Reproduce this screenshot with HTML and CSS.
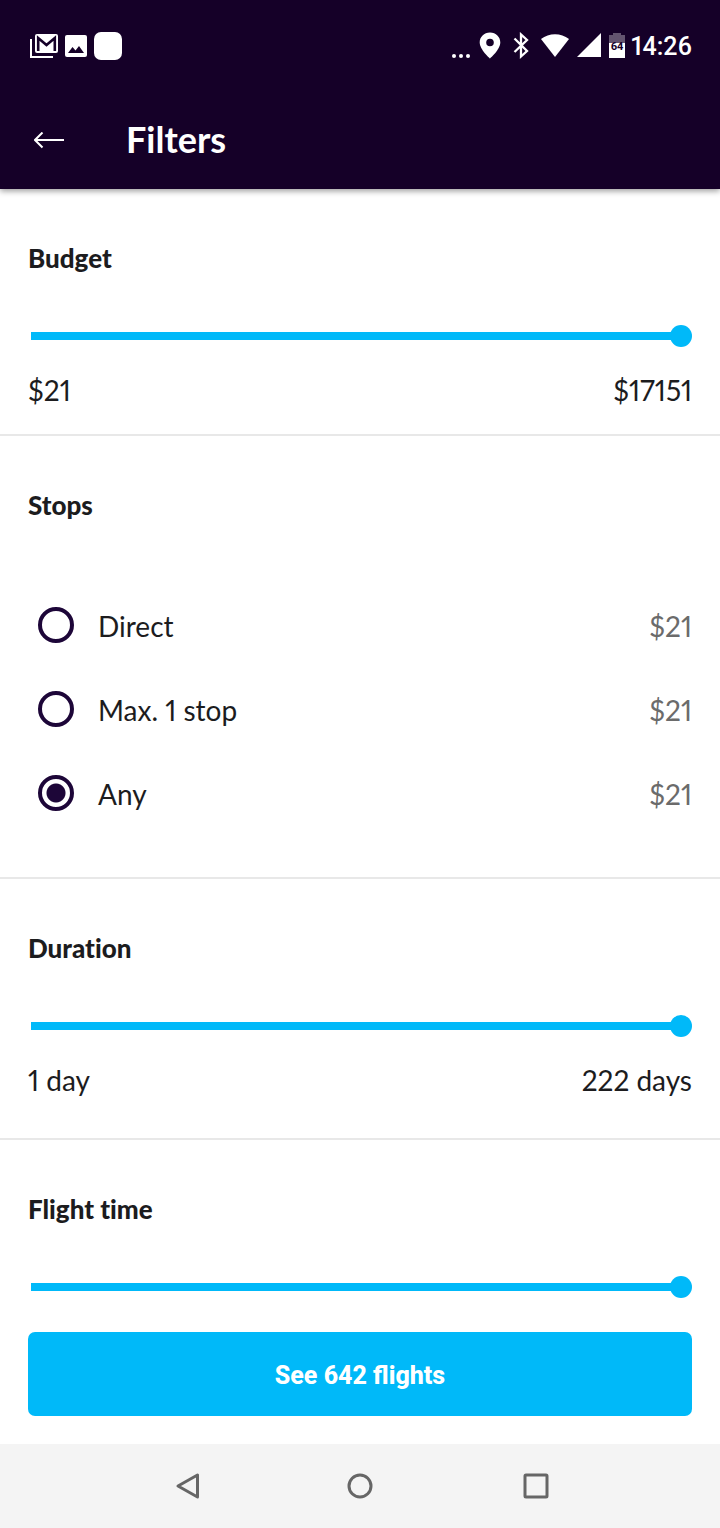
FILE: index.html
```html
<!DOCTYPE html>
<html lang="en">
<head>
    <meta charset="UTF-8">
    <meta name="viewport" content="width=device-width, initial-scale=1.0">
    <title>Filters</title>
    <link rel="stylesheet" href="styles.css">
</head>
<body>
    <header class="header">
        <div class="status-bar">
            <div class="status-left">
                <!-- mail -->
                <svg width="28" height="24" viewBox="0 0 28 24">
                    <path d="M1 5v18h22" fill="none" stroke="#fff" stroke-width="2"/>
                    <rect x="5" y="0" width="23" height="19" rx="2" fill="#fff"/>
                    <path d="M8.200 17V4l8.300 7 8.300-7V17" fill="none" stroke="#150028" stroke-width="2.600"/>
                </svg>
                <!-- photo -->
                <svg width="22" height="22" viewBox="0 0 22 22">
                    <rect width="22" height="22" rx="2" fill="#fff"/>
                    <path d="M3 18l4.500-6 3 3.500 3.500-4.500 5 7z" fill="#150028"/>
                </svg>
                <span class="app-dot"></span>
            </div>
            <div class="status-right">
                <div class="status-icons">
                    <svg width="20" height="28" viewBox="0 0 20 28" fill="#fff">
                        <circle cx="3" cy="24" r="2"/>
                        <circle cx="10" cy="24" r="2"/>
                        <circle cx="17" cy="24" r="2"/>
                    </svg>
                    <!-- location -->
                    <svg width="26" height="28" viewBox="0 0 26 28">
                        <path fill="#fff" fill-rule="evenodd" d="M11 .500C5 .500.700 5 .700 10.500.700 17.500 11 26.500 11 26.500S21.300 17.500 21.300 10.500C21.300 5 17 .500 11 .500zm0 6.200a3.800 3.800 0 1 1 0 7.600A3.800 3.800 0 0 1 11 6.700z"/>
                    </svg>
                    <!-- bluetooth -->
                    <svg width="20" height="28" viewBox="0 0 20 28">
                        <path d="M1.500 6.500l12.500 12.500L8 24.500V2.500l6 5.500L1.500 20" fill="none" stroke="#fff" stroke-width="2.300"/>
                    </svg>
                    <!-- wifi -->
                    <svg width="28" height="28" viewBox="0 0 28 28">
                        <path d="M0 7C8 .500 20 .500 28 7L14 25z" fill="#fff"/>
                    </svg>
                    <!-- signal -->
                    <svg width="24" height="28" viewBox="0 0 24 28">
                        <path d="M24 1v24H0z" fill="#fff"/>
                    </svg>
                    <!-- battery -->
                    <svg width="16" height="28" viewBox="0 0 16 28">
                        <path d="M4 1h8v2h4v9H0V3h4z" fill="#63546f"/>
                        <path d="M0 11h16v15H0z" fill="#fff"/>
                        <text x="8" y="18" text-anchor="middle" class="battery-text">64</text>
                    </svg>
                </div>
                <span class="clock">14:26</span>
            </div>
        </div>
        <div class="app-bar">
            <button class="back" aria-label="Back">
                <svg width="30" height="18" viewBox="0 0 30 18">
                    <path d="M30 8H1M8.500.500L1 8l7.500 7.500" fill="none" stroke="#fff" stroke-width="2"/>
                </svg>
            </button>
            <h1>Filters</h1>
        </div>
    </header>

    <main class="filters">
        <section class="section budget">
            <h2><label for="budget">Budget</label></h2>
            <input type="range" id="budget" class="slider" min="21" max="17151" value="17151">
            <div class="values">
                <span>$21</span>
                <span>$17151</span>
            </div>
        </section>

        <section class="section stops">
            <h2>Stops</h2>
            <label class="option">
                <input type="radio" name="stops" value="direct">
                <span>Direct</span>
                <span class="price">$21</span>
            </label>
            <label class="option">
                <input type="radio" name="stops" value="one">
                <span>Max. 1 stop</span>
                <span class="price">$21</span>
            </label>
            <label class="option">
                <input type="radio" name="stops" value="any" checked>
                <span>Any</span>
                <span class="price">$21</span>
            </label>
        </section>

        <section class="section">
            <h2><label for="duration">Duration</label></h2>
            <input type="range" id="duration" class="slider" min="1" max="222" value="222">
            <div class="values">
                <span>1 day</span>
                <span>222 days</span>
            </div>
        </section>

        <section class="section last">
            <h2><label for="flightTime">Flight time</label></h2>
            <input type="range" id="flightTime" class="slider" min="0" max="100" value="100">
        </section>
    </main>

    <div class="submit">
        <button class="see-flights">See 642 flights</button>
    </div>

    <nav class="nav-bar">
        <button aria-label="Back">
            <svg width="32" height="28" viewBox="0 0 32 28">
                <path d="M29.500 3v22L10 14z"/>
            </svg>
        </button>
        <button aria-label="Home">
            <svg width="28" height="28" viewBox="0 0 28 28">
                <circle cx="14" cy="14" r="11"/>
            </svg>
        </button>
        <button aria-label="Recent apps">
            <svg width="28" height="28" viewBox="0 0 28 28">
                <rect x="3" y="3" width="22" height="22" rx="1"/>
            </svg>
        </button>
    </nav>
</body>
</html>
```
FILE: styles.css
```css
* {
    box-sizing: border-box;
}

body {
    margin: 0;
    min-height: 100vh;
    display: flex;
    flex-direction: column;
    background: #fff;
    color: #1c1c1e;
    font-family: Lato, "Liberation Sans", sans-serif;
    font-size: 28px;
    font-variant-numeric: proportional-nums;
    line-height: 32px;
}

h1, h2 {
    margin: 0;
    font-variant-ligatures: none;
}

button {
    margin: 0;
    padding: 0;
    border: none;
    background: none;
    cursor: pointer;
}

svg {
    display: block;
}

/* header */
.header {
    background: #150028;
    color: #fff;
    box-shadow: 0 2px 6px rgba(0, 0, 0, 0.4);
}

.status-bar {
    display: flex;
    justify-content: space-between;
    align-items: center;
    height: 92px;
    padding: 0 28px 0 30px;
}

.status-left {
    display: flex;
    align-items: center;
    gap: 7px;
}

.app-dot {
    width: 28px;
    height: 28px;
    border-radius: 7px;
    background: #fff;
}

.status-right {
    display: flex;
    align-items: center;
    gap: 6px;
}

.status-icons {
    display: flex;
    gap: 8px;
}

.battery-text {
    font-family: Roboto, sans-serif;
    font-size: 11px;
    font-weight: 700;
    fill: #150028;
}

.clock {
    padding-top: 2px;
    font-family: Roboto, sans-serif;
    font-size: 25px;
    font-weight: 500;
}

.app-bar {
    display: flex;
    align-items: center;
    gap: 62px;
    height: 97px;
    padding: 0 34px;
}

.app-bar h1 {
    padding-bottom: 3px;
    font-size: 36px;
    line-height: 40px;
}

/* sections */
.filters {
    flex: 1;
}

.section {
    padding: 54px 28px 42px;
    border-bottom: 2px solid #e8e8e8;
}

.section h2 {
    margin-bottom: 51px;
    font-size: 26px;
    font-weight: 900;
    line-height: 30px;
}

.budget {
    padding-bottom: 28px;
}

.stops {
    padding-bottom: 41px;
}

.stops h2 {
    margin-bottom: 64px;
}

.last {
    padding-bottom: 0;
    border-bottom: none;
}

.slider {
    -webkit-appearance: none;
    appearance: none;
    display: block;
    width: calc(100% - 3px);
    height: 24px;
    margin: 0 0 0 3px;
    background: none;
}

.slider::-webkit-slider-runnable-track {
    height: 8px;
    background: linear-gradient(to left, transparent 8px, #00b9f9 8px);
}

.slider::-webkit-slider-thumb {
    -webkit-appearance: none;
    width: 22px;
    height: 22px;
    margin-top: -7px;
    border-radius: 50%;
    background: #00b9f9;
}

.values {
    display: flex;
    justify-content: space-between;
    margin-top: 26px;
}

.option {
    display: flex;
    align-items: center;
    gap: 24px;
    height: 84px;
    padding-left: 10px;
}

.option input {
    -webkit-appearance: none;
    appearance: none;
    width: 36px;
    height: 36px;
    margin: 0 0 2px;
    border: 4px solid #1d0638;
    border-radius: 50%;
}

.option input:checked {
    background: radial-gradient(circle, #1d0638 9px, transparent 10px);
}

.price {
    margin-left: auto;
    color: #6b6b6b;
}

/* bottom */
.submit {
    padding: 28px;
}

.see-flights {
    width: 100%;
    height: 84px;
    padding-top: 2px;
    border-radius: 7px;
    background: #00b9f9;
    color: #fff;
    font-family: Roboto, sans-serif;
    font-size: 25px;
    font-weight: 800;
}

.nav-bar {
    display: flex;
    justify-content: center;
    height: 84px;
    background: #f4f4f4;
}

.nav-bar button {
    display: flex;
    justify-content: center;
    align-items: center;
    width: 176px;
}

.nav-bar svg {
    fill: none;
    stroke: #666;
    stroke-width: 3;
    stroke-linejoin: round;
}
```
